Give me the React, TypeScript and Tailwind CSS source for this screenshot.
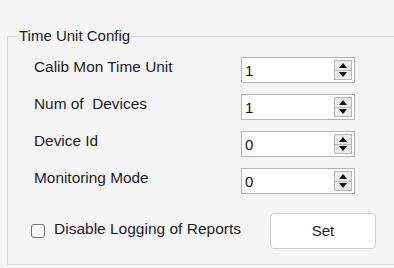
import React from "react";

function SpinBox({ value }: { value: string }) {
  return (
    <div className="relative w-[114px] h-[26px] bg-white border border-[#b4b4b4] flex items-center">
      <span className="pl-[3px] text-[15px] leading-none text-[#111]">{value}</span>
      <div className="absolute right-[2px] top-[2px] bottom-[2px] w-[18px] flex flex-col border border-[#b8b8b8] bg-[#ececec]">
        <div className="flex-1 flex items-center justify-center border-b border-[#b8b8b8]">
          <svg width="8" height="5" viewBox="0 0 8 5"><path d="M0 5 L4 0 L8 5 Z" fill="#111" /></svg>
        </div>
        <div className="flex-1 flex items-center justify-center">
          <svg width="8" height="5" viewBox="0 0 8 5"><path d="M0 0 L8 0 L4 5 Z" fill="#111" /></svg>
        </div>
      </div>
    </div>
  );
}

const rows = [
  { label: "Calib Mon Time Unit", value: "1" },
  { label: "Num of  Devices", value: "1" },
  { label: "Device Id", value: "0" },
  { label: "Monitoring Mode", value: "0" },
];

export default function App() {
  return (
    <div className="w-[394px] h-[268px] bg-[#f5f5f5] overflow-hidden pt-[36px] pl-[7px] font-['Liberation_Sans',Arial,sans-serif] text-[15px] text-[#1c1c28]">
      <div className="relative w-[400px] h-[229px] border border-[#d8d8d8]">
        <span className="absolute left-[10px] top-[-9px] px-[1px] bg-[#f5f5f5] leading-[16px] whitespace-pre">
          Time Unit Config
        </span>
        <div className="flex flex-col gap-[11px] pt-[20px]">
          {rows.map((r) => (
            <div key={r.label} className="flex items-center h-[26px]">
              <span className="w-[233px] pl-[26px] mb-[7px] whitespace-pre leading-[16px] text-[15.4px]">{r.label}</span>
              <SpinBox value={r.value} />
            </div>
          ))}
        </div>
        <div className="flex items-center mt-[19px]">
          <div className="ml-[23px] w-[14px] h-[14px] rounded-[3px] border border-[#707070] bg-[#fbfbfb] mb-[1px]" />
          <span className="ml-[9px] w-[216px] leading-[16px] mb-[4px] whitespace-pre text-[15.5px]">Disable Logging of Reports</span>
          <button className="w-[106px] h-[36px] bg-white border border-[#cfcfcf] rounded-[4px] text-[15px] text-[#1c1c28] font-['Liberation_Sans',Arial,sans-serif]">
            Set
          </button>
        </div>
      </div>
    </div>
  );
}
